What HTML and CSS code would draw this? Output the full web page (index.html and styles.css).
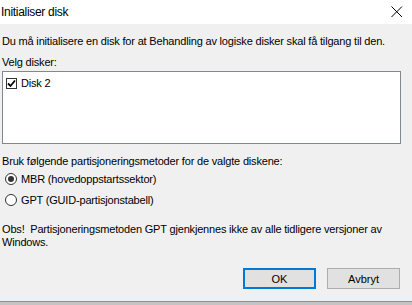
FILE: index.html
```html
<!DOCTYPE html>
<html>
	<head>
		<meta charset="utf-8"/>
		<title>Initialiser disk</title>
		<link rel="stylesheet" href="styles.css">
	</head>
	<body>
		<div class="titlebar">
			<span class="title">Initialiser disk</span>
			<svg class="close" width="12" height="12" viewBox="0 0 12 12"><path d="M0.5 0.5 L11 11 M11 0.5 L0.5 11" stroke="#000" stroke-width="1" fill="none"/></svg>
		</div>
		<div class="dialog">
			<p class="line intro">Du må initialisere en disk for at Behandling av logiske disker skal få tilgang til den.</p>
			<p class="line pick">Velg disker:</p>
			<div class="listbox">
				<label class="item">
					<span class="check">
						<svg width="9" height="9" viewBox="0 0 9 9"><path d="M1 4.5 L3.5 7 L8 1.5" stroke="#000" stroke-width="1.8" fill="none"/></svg>
					</span>
					Disk 2
				</label>
			</div>
			<p class="line method">Bruk følgende partisjoneringsmetoder for de valgte diskene:</p>
			<div class="radios">
				<label class="radio"><span class="dot on"></span>MBR (hovedoppstartssektor)</label>
				<label class="radio"><span class="dot"></span>GPT (GUID-partisjonstabell)</label>
			</div>
			<p class="note">Obs!&nbsp; Partisjoneringsmetoden GPT gjenkjennes ikke av alle tidligere versjoner av Windows.</p>
			<div class="buttons">
				<button class="btn default">OK</button>
				<button class="btn">Avbryt</button>
			</div>
		</div>
		<div class="edge"></div>
	</body>
</html>
```

FILE: styles.css
```css
html,body{margin:0;padding:0;}
body{width:412px;height:305px;overflow:hidden;background:#c4c4c4;font-family:"Liberation Sans",Arial,sans-serif;font-size:11px;letter-spacing:-0.18px;color:#000;}

.titlebar{height:24px;background:#fff;display:flex;align-items:center;justify-content:space-between;padding:0 9px 0 1px;}
.title{font-size:12px;letter-spacing:-0.3px;padding-bottom:1px;}
.close{display:block;}

.dialog{height:277px;background:#f0f0f0;display:flex;flex-direction:column;padding:0 14px 0 2px;}
.line{margin:0;line-height:13px;height:13px;white-space:nowrap;}
.intro{margin-top:11px;}
.pick{margin-top:8px;}

.listbox{margin-top:2px;width:394px;height:66px;border:1px solid #828790;background:#fff;padding:5px 0 0 3px;}
.item{display:flex;align-items:center;gap:4px;height:13px;line-height:13px;}
.check{width:11px;height:11px;border:1px solid #333;box-sizing:border-box;background:#fff;display:flex;align-items:center;justify-content:center;}
.check svg{display:block;}

.method{margin-top:11px;}
.radios{display:flex;flex-direction:column;}
.radio{display:flex;align-items:center;height:21px;padding-left:3px;gap:4px;}
.dot{width:12px;height:12px;border:1px solid #333;border-radius:50%;box-sizing:border-box;background:#fff;display:flex;align-items:center;justify-content:center;}
.dot.on::after{content:"";width:6px;height:6px;border-radius:50%;background:#333;}

.note{margin:13px 0 0;line-height:13px;width:385px;}

.buttons{margin-top:19px;display:flex;justify-content:flex-end;gap:11px;margin-right:-2px;}
.btn{width:73px;height:21px;background:#e1e1e1;border:1px solid #adadad;font-family:inherit;font-size:11px;letter-spacing:0;color:#000;padding:0;}
.btn.default{border:2px solid #0078d7;}

.edge{height:1px;background:#5b9bd5;}
```
